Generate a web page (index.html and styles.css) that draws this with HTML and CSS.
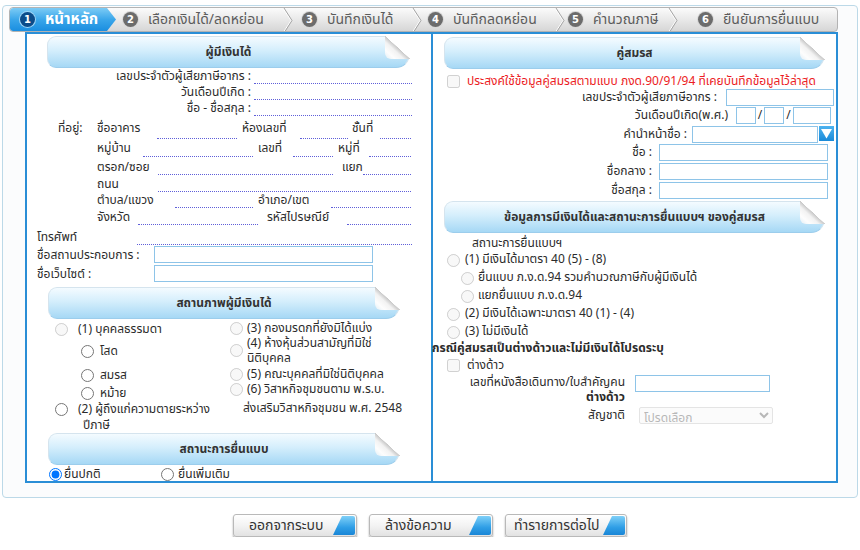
FILE: index.html
```html
<!DOCTYPE html>
<html lang="th">
<head>
<meta charset="utf-8">
<title>ภ.ง.ด.90</title>
<link rel="stylesheet" href="styles.css">
</head>
<body>
<div class="page">
  <nav class="tabs">
    <div class="tab active t1"><span class="num">1</span><span>หน้าหลัก</span></div>
    <div class="tab t2"><span class="num">2</span><span>เลือกเงินได้/ลดหย่อน</span></div>
    <svg class="chev" viewBox="0 0 10 25" width="10" height="25"><polyline points="0,0 8,12.5 0,25" fill="none" stroke="#fff" stroke-width="1"/><polyline points="1,0 9,12.5 1,25" fill="none" stroke="#a4a4a4" stroke-width="1"/></svg>
    <div class="tab t3"><span class="num">3</span><span>บันทึกเงินได้</span></div>
    <svg class="chev" viewBox="0 0 10 25" width="10" height="25"><polyline points="0,0 8,12.5 0,25" fill="none" stroke="#fff" stroke-width="1"/><polyline points="1,0 9,12.5 1,25" fill="none" stroke="#a4a4a4" stroke-width="1"/></svg>
    <div class="tab t4"><span class="num">4</span><span>บันทึกลดหย่อน</span></div>
    <svg class="chev" viewBox="0 0 10 25" width="10" height="25"><polyline points="0,0 8,12.5 0,25" fill="none" stroke="#fff" stroke-width="1"/><polyline points="1,0 9,12.5 1,25" fill="none" stroke="#a4a4a4" stroke-width="1"/></svg>
    <div class="tab t5"><span class="num">5</span><span>คำนวณภาษี</span></div>
    <svg class="chev" viewBox="0 0 10 25" width="10" height="25"><polyline points="0,0 8,12.5 0,25" fill="none" stroke="#fff" stroke-width="1"/><polyline points="1,0 9,12.5 1,25" fill="none" stroke="#a4a4a4" stroke-width="1"/></svg>
    <div class="tab t6"><span class="num">6</span><span>ยืนยันการยื่นแบบ</span></div>
  </nav>

  <div class="panel">
    <section class="col left">
      <h2 class="shead sh-l1">ผู้มีเงินได้</h2>
      <div class="irow"><span class="ilabel">เลขประจำตัวผู้เสียภาษีอากร :</span><span class="dot dtop"></span></div>
      <div class="irow"><span class="ilabel">วันเดือนปีเกิด :</span><span class="dot dtop"></span></div>
      <div class="irow"><span class="ilabel">ชื่อ - ชื่อสกุล :</span><span class="dot dtop"></span></div>

      <div class="addr">
        <div class="addr-label">ที่อยู่:</div>
        <div class="addr-rows">
          <div class="arow ar1"><span class="al">ชื่ออาคาร</span><span class="dot"></span><span class="al g5">ห้องเลขที่</span><span class="dot"></span><span class="al g4">ชั้นที่</span><span class="dot"></span></div>
          <div class="arow ar2"><span class="al">หมู่บ้าน</span><span class="dot"></span><span class="al g5">เลขที่</span><span class="dot"></span><span class="al g5">หมู่ที่</span><span class="dot"></span></div>
          <div class="arow ar3"><span class="al">ตรอก/ซอย</span><span class="dot"></span><span class="al g9">แยก</span><span class="dot"></span></div>
          <div class="arow ar4"><span class="al">ถนน</span><span class="dot"></span></div>
          <div class="arow ar5"><span class="al">ตำบล/แขวง</span><span class="dot"></span><span class="al g5">อำเภอ/เขต</span><span class="dot"></span></div>
          <div class="arow ar6"><span class="al">จังหวัด</span><span class="dot"></span><span class="al g9">รหัสไปรษณีย์</span><span class="dot"></span></div>
        </div>
      </div>
      <div class="arow phone"><span class="al">โทรศัพท์</span><span class="dot"></span></div>

      <div class="inrow"><span class="inlabel">ชื่อสถานประกอบการ :</span><input class="tin219" type="text"></div>
      <div class="inrow"><span class="inlabel">ชื่อเว็บไซต์ :</span><input class="tin219" type="text"></div>

      <h2 class="shead sh-l2">สถานภาพผู้มีเงินได้</h2>
      <div class="status">
        <div class="scol1">
          <label class="ri lv1 h22"><input type="radio" disabled><span>(1) บุคคลธรรมดา</span></label>
          <label class="ri lv2 h24"><input type="radio" name="ms"><span>โสด</span></label>
          <label class="ri lv2 h18"><input type="radio" name="ms"><span>สมรส</span></label>
          <label class="ri lv2 h16"><input type="radio" name="ms"><span>หม้าย</span></label>
          <label class="ri lv1"><input type="radio" name="pt"><span>(2) ผู้ถึงแก่ความตายระหว่าง<br><span class="wrap2">ปีภาษี</span></span></label>
        </div>
        <div class="scol2">
          <label class="ri rv h16"><input type="radio" disabled><span>(3) กองมรดกที่ยังมิได้แบ่ง</span></label>
          <label class="ri rv h30 lh15"><input type="radio" disabled class="mid"><span>(4) ห้างหุ้นส่วนสามัญที่มิใช่<br>นิติบุคคล</span></label>
          <label class="ri rv h15"><input type="radio" disabled><span>(5) คณะบุคคลที่มิใช่นิติบุคคล</span></label>
          <label class="ri rv h19"><input type="radio" disabled><span>(6) วิสาหกิจชุมชนตาม พ.ร.บ.</span></label>
          <div class="cont">ส่งเสริมวิสาหกิจชุมชน พ.ศ. 2548</div>
        </div>
      </div>

      <h2 class="shead sh-l2 sh-l3">สถานะการยื่นแบบ</h2>
      <div class="filing">
        <label class="fi fi1"><input type="radio" name="fl" checked><span>ยื่นปกติ</span></label>
        <label class="fi fi2"><input type="radio" name="fl"><span>ยื่นเพิ่มเติม</span></label>
      </div>
    </section>

    <section class="col right">
      <h2 class="shead sh-r">คู่สมรส</h2>
      <label class="chkrow"><input type="checkbox" disabled><span class="red">ประสงค์ใช้ข้อมูลคู่สมรสตามแบบ ภงด.90/91/94 ที่เคยบันทึกข้อมูลไว้ล่าสุด</span></label>
      <div class="frow fr-tax"><span class="fl">เลขประจำตัวผู้เสียภาษีอากร :</span><input type="text" class="in-tax"></div>
      <div class="frow fr-date"><span class="fl">วันเดือนปีเกิด(พ.ศ.)</span><input type="text" class="in-d"><span class="sl">/</span><input type="text" class="in-d"><span class="sl sl2">/</span><input type="text" class="in-y"></div>
      <div class="frow fr-title"><span class="fl">คำนำหน้าชื่อ :</span><input type="text" class="in-title"><span class="ddbtn"><svg viewBox="0 0 15 15" width="15" height="15"><defs><linearGradient id="ddg" x1="0" y1="0" x2="0" y2="1"><stop offset="0" stop-color="#4db3f0"/><stop offset="1" stop-color="#1a8ad8"/></linearGradient></defs><rect x="0" y="0" width="15" height="15" fill="url(#ddg)"/><polygon points="2,3 13,3 7.5,12.5" fill="#fff"/></svg></span></div>
      <div class="frow fr-name"><span class="fl">ชื่อ :</span><input type="text" class="in-name"></div>
      <div class="frow fr-name fr-gap"><span class="fl">ชื่อกลาง :</span><input type="text" class="in-name"></div>
      <div class="frow fr-name fr-gap"><span class="fl">ชื่อสกุล :</span><input type="text" class="in-name"></div>

      <h2 class="shead sh-r sh-r2">ข้อมูลการมีเงินได้และสถานะการยื่นแบบฯ ของคู่สมรส</h2>
      <div class="subhead">สถานะการยื่นแบบฯ</div>
      <label class="rr lv1r"><input type="radio" disabled><span>(1) มีเงินได้มาตรา 40 (5) - (8)</span></label>
      <label class="rr lv2r"><input type="radio" disabled><span>ยื่นแบบ ภ.ง.ด.94 รวมคำนวณภาษีกับผู้มีเงินได้</span></label>
      <label class="rr lv2r"><input type="radio" disabled><span>แยกยื่นแบบ ภ.ง.ด.94</span></label>
      <label class="rr lv1r"><input type="radio" disabled><span>(2) มีเงินได้เฉพาะมาตรา 40 (1) - (4)</span></label>
      <label class="rr lv1r"><input type="radio" disabled><span>(3) ไม่มีเงินได้</span></label>
      <div class="boldline">กรณีคู่สมรสเป็นต่างด้าวและไม่มีเงินได้โปรดระบุ</div>
      <label class="chkrow chk2"><input type="checkbox" disabled><span>ต่างด้าว</span></label>
      <div class="frow fr-pass"><span class="fl">เลขที่หนังสือเดินทาง/ใบสำคัญคน<br><b>ต่างด้าว</b></span><input type="text" class="in-pass"></div>
      <div class="frow fr-nat"><span class="fl">สัญชาติ</span><select disabled class="sel"><option>โปรดเลือก</option></select></div>
    </section>
  </div>
</div>

<div class="actions">
  <button class="btn b1" type="button">ออกจากระบบ</button>
  <button class="btn b2" type="button">ล้างข้อความ</button>
  <button class="btn b3" type="button">ทำรายการต่อไป</button>
</div>
</body>
</html>
```

FILE: styles.css
```css
* { box-sizing: border-box; }
body {
  margin: 0;
  background: #fff;
  font-family: Tahoma, "Noto Sans Thai", "Noto Sans", "DejaVu Sans", sans-serif;
  font-size: 12px;
  color: #2b2b2b;
}
.page {
  margin: 5px 2px 0;
  height: 493px;
  border: 1px solid #bcd9e8;
  border-radius: 4px;
  background: #fbfcfd;
  padding: 1px 0 0 6px;
}

/* tabs */
.tabs {
  display: flex;
  width: 829px;
  height: 25px;
  border: 1px solid #b3b3b3;
  border-radius: 4px;
  background: linear-gradient(#fbfbfb, #e9e9e9 50%, #d6d6d6);
  overflow: hidden;
}
.tab {
  display: flex;
  align-items: center;
  height: 100%;
  color: #5c5c5c;
  font-size: 14px;
  white-space: nowrap;
  flex: none;
}
.num {
  width: 15px;
  height: 15px;
  border-radius: 50%;
  background: #6c6c6c;
  box-shadow: 0 0 0 1px #d8d8d8;
  color: #fff;
  font-size: 10px;
  font-weight: bold;
  line-height: 15px;
  text-align: center;
  margin-right: 10px;
  flex: none;
  font-family: "DejaVu Sans", sans-serif;
}
.tab.active {
  background: linear-gradient(#7ccbf5, #3aa6ea 50%, #1a8ee0);
  color: #fff;
  font-weight: bold;
  font-size: 15px;
  border-radius: 3px 0 0 3px;
  clip-path: polygon(0 0, calc(100% - 9px) 0, 100% 50%, calc(100% - 9px) 100%, 0 100%);
}
.tab.active .num { background: #0c4c8a; box-shadow: 0 0 0 1px #9fd5f6; }
.t1 { width: 106px; padding-left: 10px; }
.t2 { width: 167px; padding-left: 7px; }
.t3 { width: 119px; padding-left: 9px; }
.t4 { width: 133px; padding-left: 6px; }
.t5 { width: 103px; padding-left: 3px; }
.t6 { flex: 1; padding-left: 20px; }
.chev { flex: none; display: block; }

/* main panel */
.panel {
  display: flex;
  margin-left: 16px;
  width: 813px;
  height: 451px;
  border: 2px solid #2a8ed6;
  background: #fff;
}
.col.left { width: 406px; border-right: 2px solid #2a8ed6; }
.col.right { flex: 1; }

/* section header */
.shead {
  position: relative;
  margin: 2px 0 0 20px;
  width: 363px;
  height: 32px;
  border: 1px solid #d5e4ee;
  border-bottom-color: #9ccdec;
  border-radius: 9px 4px 14px 9px;
  background: linear-gradient(#f4fbff, #d4eefc 45%, #a6d8f5);
  font-size: 12px;
  font-weight: bold;
  line-height: 30px;
  text-align: center;
  color: #333;
}
.shead::after {
  content: "";
  position: absolute;
  top: -1px;
  right: -1px;
  width: 25px;
  height: 23px;
  background: linear-gradient(to bottom left, #fff 49%, #c9c9c9 50%, #f2f2f2 62%, #fdfdfd 80%, #e2eef5);
  border-bottom-left-radius: 6px;
}
.sh-l2 { margin: 3px 0 0 21px; width: 352px; }
.sh-l3 { margin-top: 1px; }
.sh-r { margin: 3px 0 0 11px; width: 381px; }
.sh-r2 { margin-top: 2px; }

/* dotted fields */
.dot {
  display: block;
  border-bottom: 1px dotted #5f5fd9;
}
.irow { display: flex; height: 16px; }
.ilabel { width: 224px; text-align: right; line-height: 16px; white-space: nowrap; }
.dtop { margin-left: 3px; width: 158px; height: 16px; }

.addr { display: flex; margin-top: 4px; }
.addr-label { width: 70px; padding-left: 31px; line-height: 16px; }
.arow { display: grid; }
.arow .al { line-height: 16px; white-space: nowrap; }
.g4 { padding-left: 4px; }
.g5 { padding-left: 5px; }
.g9 { padding-left: 9px; }
.ar1 { grid-template-columns: 60px 80px 63px 48px 32px 31px; height: 19px; }
.ar2 { grid-template-columns: 46px 110px 40px 40px 36px 42px; height: 18px; }
.ar2 .al { margin-top: 1px; }
.ar3 { grid-template-columns: 61px 175px 30px 48px; height: 16px; }
.ar3 .al { margin-top: 2px; }
.ar4 { grid-template-columns: 61px 253px; height: 17px; }
.ar4 .al { margin-top: 3px; }
.ar5 { grid-template-columns: 78px 78px 78px 80px; height: 18px; }
.ar5 .al { margin-top: 2px; }
.ar6 { grid-template-columns: 41px 120px 89px 64px; height: 17px; }
.ar6 .al { margin-top: 1px; }
.phone { grid-template-columns: 110px 275px; height: 19px; }
.phone .al { margin-top: 4px; padding-left: 10px; }

.inrow { display: flex; height: 19px; }
.phone + .inrow { margin-top: 2px; }
.inlabel { width: 127px; padding-left: 10px; margin-top: 1px; line-height: 16px; white-space: nowrap; }
input[type="text"] {
  display: block;
  margin: 0;
  padding: 0 3px;
  height: 17px;
  border: 1px solid #8ec4e8;
  border-radius: 0;
  background: #fff;
  font: inherit;
}
.tin219 { width: 219px; margin-top: 1px; }

/* status radios */
.status { display: flex; height: 113px; }
.scol1 { width: 203px; padding-top: 2px; }
.scol2 { flex: 1; padding-top: 1px; }
input[type="radio"], input[type="checkbox"] {
  margin: 1.5px 0 0;
  width: 13px;
  height: 13px;
  flex: none;
}
.ri { display: flex; align-items: flex-start; line-height: 16px; white-space: nowrap; }
.lv1 { padding-left: 28px; }
.lv1 > span { margin-left: 10px; }
.lv2 { padding-left: 54px; }
.lv2 > span { margin-left: 6px; }
.rv > span { margin-left: 4px; }
.wrap2 { margin-left: 5px; }
.h15 { height: 15px; }
.h16 { height: 16px; }
.h18 { height: 18px; }
.h19 { height: 19px; }
.h22 { height: 22px; }
.h24 { height: 24px; }
.h30 { height: 30px; }
.lh15 { line-height: 15px; }
.ri input.mid { margin-top: 8px; }
.cont { padding-left: 13px; line-height: 16px; white-space: nowrap; }

.filing { display: flex; margin-top: 1px; height: 16px; line-height: 16px; }
.fi { display: flex; align-items: flex-start; }
.fi1 { width: 134px; padding-left: 22px; }
.fi1 > span { margin-left: 2px; }
.fi2 > span { margin-left: 4px; }

/* right column */
.chkrow { display: flex; align-items: flex-start; margin-top: 4px; height: 16px; line-height: 16px; padding-left: 14px; white-space: nowrap; }
.chkrow > span { margin-left: 7px; }
.red { color: #ec1c24; }
.frow { display: flex; height: 17px; }
.fl { text-align: right; line-height: 17px; white-space: nowrap; flex: none; }
.fr-tax .fl { width: 284px; margin-right: 9px; }
.in-tax { width: 108px; }
.fr-date { margin-top: 1px; }
.fr-date .fl { width: 295px; margin-right: 8px; }
.in-d { width: 20px; }
.in-y { width: 38px; }
.sl { width: 8px; text-align: center; line-height: 17px; }
.sl2 { width: 9px; }
.fr-title { margin-top: 2px; }
.fr-title .fl { width: 254px; margin-right: 5px; }
.in-title { width: 126px; }
.ddbtn { display: block; margin-left: 1px; height: 15px; }
.ddbtn svg { display: block; }
.fr-name { margin-top: 1px; }
.fr-gap { margin-top: 2px; }
.fr-name .fl { width: 219px; margin-right: 7px; }
.in-name { width: 169px; }

.subhead { margin: 2px 0 0 39px; line-height: 16px; }
.rr { display: flex; align-items: flex-start; height: 18px; line-height: 16px; white-space: nowrap; }
.rr input { margin-top: 2.5px; }
.lv1r { padding-left: 14px; }
.lv1r > span { margin-left: 5px; }
.lv2r { padding-left: 28px; }
.lv2r > span { margin-left: 4px; }
.boldline { margin-left: -1px; font-weight: bold; line-height: 15px; height: 15px; white-space: nowrap; }
.chk2 { margin-top: 1px; }
.fr-pass { margin-top: 2px; height: 30px; }
.fr-pass .fl { width: 192px; line-height: 15px; margin-right: 10px; }
.in-pass { width: 135px; margin-top: 6px; }
.fr-nat { margin-top: 2px; }
.fr-nat .fl { width: 192px; margin-right: 14px; }
.sel {
  width: 134px;
  height: 17px;
  margin: 0;
  font: inherit;
  color: #9a9a9a;
  background: #fafafa;
  border: 1px solid #d9d9d9;
  border-radius: 2px;
}

/* buttons */
.actions {
  display: flex;
  justify-content: center;
  gap: 12px;
  margin-top: 16px;
}
.btn {
  position: relative;
  height: 23px;
  margin: 0;
  padding: 0 0 0 15px;
  border: 1px solid #b9b9b9;
  border-radius: 3px;
  background: linear-gradient(#ffffff, #f3f3f3 50%, #e2e2e2);
  box-shadow: 0 2px 2px rgba(0, 0, 0, 0.35);
  font-family: inherit;
  font-size: 14px;
  color: #333;
  text-align: left;
}
.btn::after {
  content: "";
  position: absolute;
  top: 1px;
  right: 1px;
  bottom: 1px;
  width: 22px;
  background: linear-gradient(#7fd0f8, #2f9ee6 60%, #1a86d6);
  clip-path: polygon(9px 0, 100% 0, 100% 100%, 0 100%);
  border-radius: 0 2px 2px 0;
}
.b1 { width: 124px; }
.b2 { width: 124px; }
.b3 { width: 122px; padding-left: 8px; }
```
